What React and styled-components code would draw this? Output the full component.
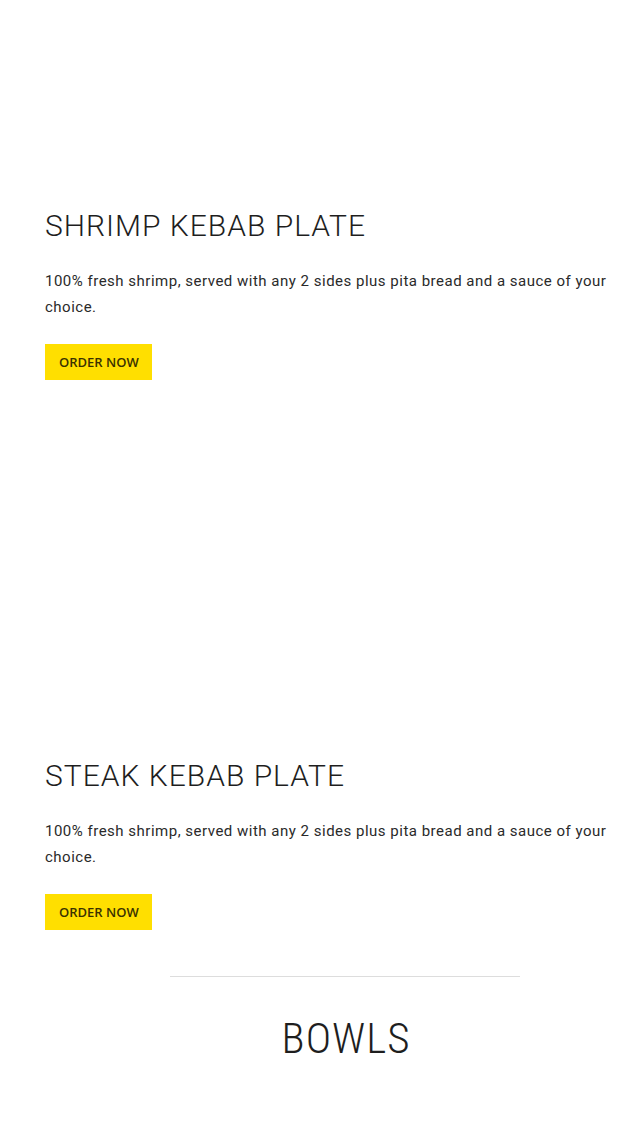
import React from 'react';
import styled, { createGlobalStyle } from 'styled-components';

const GlobalStyle = createGlobalStyle`
    html, body {
        margin: 0;
        padding: 0;
        background: #ffffff;
        overflow-x: hidden;
    }
    body {
        font-family: "Roboto", "Liberation Sans", sans-serif;
        color: #222222;
    }
`;

const Page = styled.div`
    width: 600px;
    margin-left: 45px;
    display: flex;
    flex-direction: column;
`;

const Item = styled.section`
    display: flex;
    flex-direction: column;
    align-items: flex-start;
`;

const Picture = styled.div`
    height: ${props => props.$height}px;
    width: 100%;
    background: #ffffff;
`;

const Title = styled.h2`
    margin: 0;
    font-family: "Roboto", "Liberation Sans", sans-serif;
    font-weight: 300;
    font-size: 30px;
    line-height: 44px;
    letter-spacing: 1px;
    color: #1e1e1e;
`;

const Text = styled.p`
    margin: 20px 0 0;
    width: 570px;
    font-family: "Roboto", "Liberation Sans", sans-serif;
    font-size: 15px;
    line-height: 26px;
    letter-spacing: 0.5px;
    color: #2a2a2a;
`;

const OrderButton = styled.a`
    margin-top: 24px;
    display: inline-flex;
    align-items: center;
    height: 36px;
    padding: 0 13px 0 14px;
    background: #ffdf00;
    font-family: "Open Sans", "Liberation Sans", sans-serif;
    font-weight: 600;
    font-size: 13px;
    letter-spacing: 0;
    color: #3b3200;
    text-decoration: none;
`;

const Divider = styled.hr`
    align-self: center;
    width: 350px;
    margin: 46px 0 0;
    border: 0;
    border-top: 1px solid #dddddd;
`;

const SectionTitle = styled.h1`
    align-self: center;
    margin: 34px 0 0;
    padding-left: 2px;
    font-family: "Roboto", "Liberation Sans", sans-serif;
    font-weight: 300;
    font-size: 43px;
    line-height: 54px;
    letter-spacing: 1px;
    color: #1e1e1e;
    font-stretch: condensed;
`;

const dishes = [
    { name: 'SHRIMP KEBAB PLATE', gap: 204 },
    { name: 'STEAK KEBAB PLATE', gap: 374 },
];

export default function App() {
    return (
        <>
            <GlobalStyle />
            <Page>
                {dishes.map(d => (
                    <Item key={d.name}>
                        <Picture $height={d.gap} />
                        <Title>{d.name}</Title>
                        <Text>
                            100% fresh shrimp, served with any 2 sides plus pita bread and a sauce of your choice.
                        </Text>
                        <OrderButton href="#">ORDER NOW</OrderButton>
                    </Item>
                ))}
                <Divider />
                <SectionTitle>BOWLS</SectionTitle>
            </Page>
        </>
    );
}
